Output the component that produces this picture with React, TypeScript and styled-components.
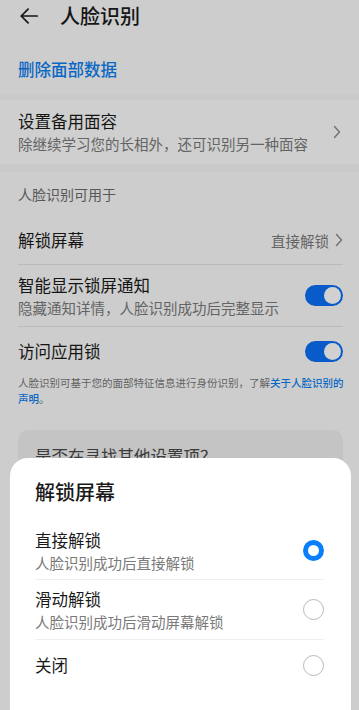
import React from "react";
import styled, { createGlobalStyle } from "styled-components";

const Global = createGlobalStyle`
  html, body { margin: 0; padding: 0; }
  body {
    background: #fbfbfb;
    font-family: "Noto Sans CJK SC", "Noto Sans", sans-serif;
    color: #1b1b1b;
    -webkit-font-smoothing: antialiased;
  }
  * { box-sizing: border-box; }
`;

const Screen = styled.div`
  position: relative;
  width: 359px;
  height: 710px;
  overflow: hidden;
  background: #fbfbfb;
`;

const Header = styled.div`
  display: flex;
  align-items: center;
  height: 32px;
  padding-left: 18px;
  gap: 20px;
`;

const Title = styled.div`
  font-size: 20px;
  font-weight: 500;
  color: #1a1a1a;
  line-height: 1;
`;

const LinkRow = styled.div`
  display: flex;
  align-items: center;
  height: 62px;
  padding: 12px 18px 0;
  font-size: 16.5px;
  font-weight: 500;
  color: #0d7ff0;
`;

const Gap = styled.div<{ h: number }>`
  height: ${(p) => p.h}px;
  background: #f6f6f6;
`;

const Card = styled.div`
  display: flex;
  align-items: center;
  height: 64px;
  padding: 0 18px;
  background: #fdfdfd;
`;

const TextCol = styled.div`
  flex: 1;
  display: flex;
  flex-direction: column;
`;

const ItemTitle = styled.div`
  font-size: 16.5px;
  line-height: 24px;
  color: #1a1a1a;
`;

const ItemSub = styled.div`
  font-size: 14.5px;
  line-height: 22px;
  color: #7a7a7a;
`;

const SectionLabel = styled.div`
  height: 44px;
  display: flex;
  align-items: center;
  padding: 0 18px;
  font-size: 14px;
  color: #6c6c6c;
`;

const Row = styled.div<{ h: number; last?: boolean }>`
  display: flex;
  align-items: center;
  height: ${(p) => p.h}px;
  margin: 0 16px 0 18px;
  border-bottom: ${(p) => (p.last ? "none" : "1px solid #e4e4e4")};
`;

const Value = styled.div`
  display: flex;
  align-items: center;
  gap: 6px;
  font-size: 14.5px;
  color: #7a7a7a;
`;

const Switch = styled.div`
  width: 38px;
  height: 21px;
  border-radius: 11px;
  background: #0a6ff5;
  position: relative;
  flex-shrink: 0;
  &::after {
    content: "";
    position: absolute;
    right: 2px;
    top: 2px;
    width: 17px;
    height: 17px;
    border-radius: 50%;
    background: #fff;
  }
`;

const Note = styled.div`
  padding: 0 14px 0 18px;
  font-size: 10.5px;
  line-height: 15.5px;
  letter-spacing: 0;
  color: #777;
`;

const NoteLink = styled.span`
  color: #0d7ff0;
  font-weight: 500;
`;

const HintCard = styled.div`
  margin: 24px 16px 0 18px;
  height: 80px;
  border-radius: 10px;
  background: #efefef;
  padding: 14px 17px;
  font-size: 16.5px;
  color: #4a4a4a;
`;

const Scrim = styled.div`
  position: absolute;
  inset: 0;
  background: rgba(0, 0, 0, 0.18);
`;

const Sheet = styled.div`
  position: absolute;
  left: 10px;
  right: 8px;
  top: 458px;
  bottom: 0;
  background: #fff;
  border-radius: 18px 18px 0 0;
  padding: 18px 27px 0 25px;
`;

const SheetTitle = styled.div`
  font-size: 20px;
  font-weight: 500;
  line-height: 32px;
  color: #1a1a1a;
  margin-bottom: 14px;
`;

const Option = styled.div<{ h: number; last?: boolean }>`
  display: flex;
  align-items: center;
  height: ${(p) => p.h}px;
  border-bottom: ${(p) => (p.last ? "none" : "1px solid #efefef")};
`;

const Radio = styled.div<{ on?: boolean }>`
  width: 21px;
  height: 21px;
  border-radius: 50%;
  flex-shrink: 0;
  border: ${(p) => (p.on ? "5.5px solid #0a7ffb" : "1px solid #b8b8b8")};
  background: #fff;
`;

const BackArrow = () => (
  <svg width="22" height="22" viewBox="0 0 24 24" fill="none" stroke="#1a1a1a" strokeWidth="1.9" strokeLinecap="round" strokeLinejoin="round">
    <path d="M21 12H3.5M11 4.5L3.5 12l7.5 7.5" />
  </svg>
);

const Chevron = () => (
  <svg width="8" height="14" viewBox="0 0 8 14" fill="none" stroke="#8a8a8a" strokeWidth="1.4" strokeLinecap="round" strokeLinejoin="round">
    <path d="M1.5 1.5L6.5 7l-5 5.5" />
  </svg>
);

export default function App() {
  return (
    <>
      <Global />
      <Screen>
        <Header>
          <BackArrow />
          <Title>人脸识别</Title>
        </Header>
        <LinkRow>删除面部数据</LinkRow>
        <Gap h={6} />
        <Card>
          <TextCol>
            <ItemTitle>设置备用面容</ItemTitle>
            <ItemSub>除继续学习您的长相外，还可识别另一种面容</ItemSub>
          </TextCol>
          <Chevron />
        </Card>
        <Gap h={8} />
        <SectionLabel>人脸识别可用于</SectionLabel>
        <Row h={49}>
          <TextCol>
            <ItemTitle>解锁屏幕</ItemTitle>
          </TextCol>
          <Value>
            直接解锁
            <Chevron />
          </Value>
        </Row>
        <Row h={62}>
          <TextCol>
            <ItemTitle>智能显示锁屏通知</ItemTitle>
            <ItemSub>隐藏通知详情，人脸识别成功后完整显示</ItemSub>
          </TextCol>
          <Switch />
        </Row>
        <Row h={48} last>
          <TextCol>
            <ItemTitle>访问应用锁</ItemTitle>
          </TextCol>
          <Switch />
        </Row>
        <Note>
          人脸识别可基于您的面部特征信息进行身份识别，了解<NoteLink>关于人脸识别的</NoteLink>
          <br />
          <NoteLink>声明</NoteLink>。
        </Note>
        <HintCard>是否在寻找其他设置项？</HintCard>
        <Scrim />
        <Sheet>
          <SheetTitle>解锁屏幕</SheetTitle>
          <Option h={58}>
            <TextCol>
              <ItemTitle>直接解锁</ItemTitle>
              <ItemSub>人脸识别成功后直接解锁</ItemSub>
            </TextCol>
            <Radio on />
          </Option>
          <Option h={60}>
            <TextCol>
              <ItemTitle>滑动解锁</ItemTitle>
              <ItemSub>人脸识别成功后滑动屏幕解锁</ItemSub>
            </TextCol>
            <Radio />
          </Option>
          <Option h={50} last>
            <TextCol>
              <ItemTitle>关闭</ItemTitle>
            </TextCol>
            <Radio />
          </Option>
        </Sheet>
      </Screen>
    </>
  );
}
